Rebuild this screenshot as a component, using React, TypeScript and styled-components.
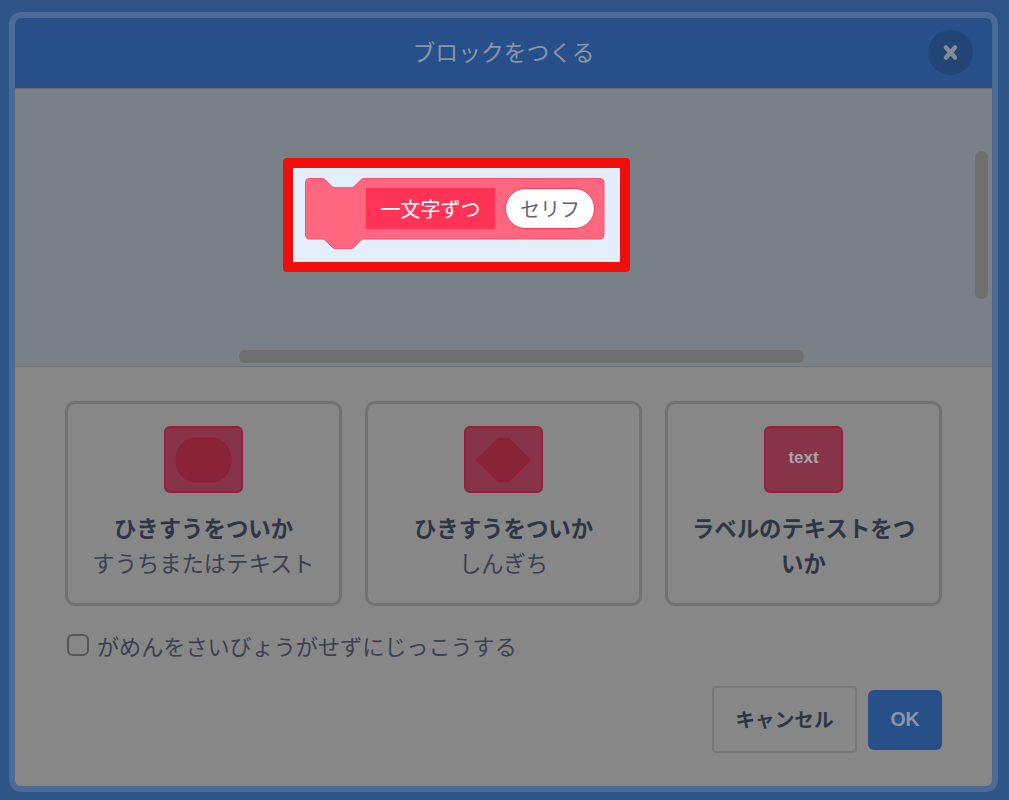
import React from 'react'
import styled, { createGlobalStyle } from 'styled-components'

const FONT = `"Noto Sans CJK JP", "Noto Sans", sans-serif`

const GlobalStyle = createGlobalStyle`
  html, body {
    margin: 0;
    padding: 0;
    height: 800px;
    overflow: hidden;
    background: #2f5487;
  }
  * {
    box-sizing: border-box;
  }
`

const Page = styled.div`
  width: 1009px;
  height: 800px;
  padding: 12px 11px 8px 9px;
  font-family: ${FONT};
`

const Modal = styled.div`
  width: 989px;
  height: 780px;
  border: 6px solid #4b6a94;
  border-radius: 12px;
  overflow: hidden;
  display: flex;
  flex-direction: column;
  background: #878787;
`

const Header = styled.header`
  position: relative;
  height: 70px;
  padding-bottom: 4px;
  flex: none;
  display: flex;
  align-items: center;
  justify-content: center;
  background: #27508a;
  color: #8a95a5;
  font-size: 22.8px;
`

const CloseButton = styled.button`
  position: absolute;
  top: 12px;
  right: 19px;
  width: 45px;
  height: 45px;
  padding: 0;
  border: none;
  border-radius: 50%;
  background: #214676;
  display: flex;
  align-items: center;
  justify-content: center;
`

const Canvas = styled.div`
  position: relative;
  height: 279px;
  flex: none;
  padding: 69px 0 0 268px;
  background: #7a8087;
  border-top: 1px solid #6d7074;
  border-bottom: 1px solid #6f7174;
`

const Highlight = styled.div`
  width: 347px;
  height: 114px;
  padding: 10px 12px;
  border: 10px solid #f20d0d;
  border-radius: 4px;
  background: #e3eefb;
`

const Block = styled.div`
  position: relative;
  width: 300px;
  height: 72px;
  padding: 10px 0 0 61px;
  display: flex;
  align-items: flex-start;
  gap: 10px;
`

const BlockShape = styled.svg`
  position: absolute;
  top: 0;
  left: 0;
`

const BlockLabel = styled.span`
  position: relative;
  width: 129px;
  height: 41px;
  display: flex;
  align-items: center;
  justify-content: center;
  background: #ff3355;
  color: #fff;
  font-size: 20px;
`

const BlockInput = styled.span`
  position: relative;
  width: 90px;
  height: 41px;
  display: flex;
  align-items: center;
  justify-content: center;
  border: 1.5px solid #ff3355;
  border-radius: 21px;
  background: #fff;
  color: #5c6478;
  font-size: 20px;
`

const ScrollThumb = styled.div<{ $vertical?: boolean }>`
  position: absolute;
  background: #6f6f6f;
  border-radius: 6px;
  ${(p) =>
    p.$vertical
      ? `top: 62px; right: 4px; width: 13px; height: 148px;`
      : `bottom: 3px; left: 224px; width: 565px; height: 13px;`}
`

const Body = styled.div`
  flex: 1;
  padding: 34px 50px 0;
  display: flex;
  flex-direction: column;
`

const Cards = styled.div`
  display: flex;
  gap: 23px;
`

const Card = styled.div`
  width: 277px;
  height: 205px;
  padding: 22px 14px 0;
  border: 3px solid #727272;
  border-radius: 10px;
  display: flex;
  flex-direction: column;
  align-items: center;
  text-align: center;
  color: #2f3545;
`

const ArgIcon = styled.div`
  width: 79px;
  height: 67px;
  flex: none;
  display: flex;
  align-items: center;
  justify-content: center;
  border: 2px solid #981c3b;
  border-radius: 6px;
  background: #87344a;
`

const ArgIconText = styled.span`
  margin-bottom: 4px;
  color: #a9a4a7;
  font-family: "Liberation Sans", Arial, sans-serif;
  font-size: 17px;
  font-weight: 700;
`

const CardTitle = styled.div`
  margin-top: 17px;
  font-size: 22.4px;
  line-height: 35px;
  font-weight: 700;
`

const CardSub = styled.div`
  font-size: 22.3px;
  line-height: 35px;
  color: #3b4152;
`

const CheckRow = styled.label`
  margin: 27px 0 0 2px;
  height: 24px;
  display: flex;
  align-items: center;
  gap: 8px;
  color: #3b4152;
  font-size: 22.1px;
`

const CheckBox = styled.span`
  width: 22px;
  height: 22px;
  flex: none;
  border: 2px solid #565656;
  border-radius: 6px;
`

const Actions = styled.div`
  margin-top: 29px;
  display: flex;
  align-items: center;
  justify-content: flex-end;
  gap: 11px;
`

const CancelButton = styled.button`
  width: 145px;
  height: 67px;
  padding: 0 0 2px;
  border: 2px solid #777;
  border-radius: 4px;
  background: transparent;
  color: #2f3545;
  font-family: ${FONT};
  font-size: 19.6px;
  font-weight: 700;
`

const OkButton = styled.button`
  width: 74px;
  height: 60px;
  padding: 0;
  border: none;
  border-radius: 6px;
  background: #27508a;
  color: #8a95a5;
  font-family: "Liberation Sans", Arial, sans-serif;
  font-size: 19.5px;
  font-weight: 700;
`

export default function App() {
  return (
    <Page>
      <GlobalStyle />
      <Modal>
        <Header>
          ブロックをつくる
          <CloseButton aria-label="close">
            <svg width="17" height="17" viewBox="0 0 17 17">
              <path
                d="M4 3.5 13 13.5M13 3.5 4 13.5"
                stroke="#868b92"
                strokeWidth="4.5"
                strokeLinecap="round"
              />
            </svg>
          </CloseButton>
        </Header>
        <Canvas>
          <Highlight>
            <Block>
              <BlockShape width="300" height="72" viewBox="0 0 300 72">
                <path
                  d="M4.5.5H17a4 4 0 0 1 3 1.2L27 8.5a4 4 0 0 0 3 1.2H46a4 4 0 0 0 3-1.2L56 1.7a4 4 0 0 1 3-1.2H295a4 4 0 0 1 4 4V57a4 4 0 0 1-4 4H59a4 4 0 0 0-3 1.2L49 69a4 4 0 0 1-3 1.5H30a4 4 0 0 1-3-1.5L20 62.2a4 4 0 0 0-3-1.2H4.5a4 4 0 0 1-4-4V4.5a4 4 0 0 1 4-4Z"
                  fill="#ff6680"
                  stroke="#ff4d6a"
                />
              </BlockShape>
              <BlockLabel>一文字ずつ</BlockLabel>
              <BlockInput>セリフ</BlockInput>
            </Block>
          </Highlight>
          <ScrollThumb $vertical />
          <ScrollThumb />
        </Canvas>
        <Body>
          <Cards>
            <Card>
              <ArgIcon>
                <svg width="57" height="46" viewBox="0 0 57 46">
                  <rect x="1" y="1" width="55" height="44" rx="18" ry="22" fill="#882338" stroke="#981c3b" />
                </svg>
              </ArgIcon>
              <CardTitle>ひきすうをついか</CardTitle>
              <CardSub>すうちまたはテキスト</CardSub>
            </Card>
            <Card>
              <ArgIcon>
                <svg width="57" height="46" viewBox="0 0 57 46">
                  <path
                    d="M1 23 22 2a3 3 0 0 1 2-1H33a3 3 0 0 1 2 1L56 23 35 44a3 3 0 0 1-2 1H24a3 3 0 0 1-2-1Z"
                    fill="#882338"
                    stroke="#981c3b"
                  />
                </svg>
              </ArgIcon>
              <CardTitle>ひきすうをついか</CardTitle>
              <CardSub>しんぎち</CardSub>
            </Card>
            <Card>
              <ArgIcon>
                <ArgIconText>text</ArgIconText>
              </ArgIcon>
              <CardTitle>ラベルのテキストをついか</CardTitle>
            </Card>
          </Cards>
          <CheckRow>
            <CheckBox />
            がめんをさいびょうがせずにじっこうする
          </CheckRow>
          <Actions>
            <CancelButton>キャンセル</CancelButton>
            <OkButton>OK</OkButton>
          </Actions>
        </Body>
      </Modal>
    </Page>
  )
}
